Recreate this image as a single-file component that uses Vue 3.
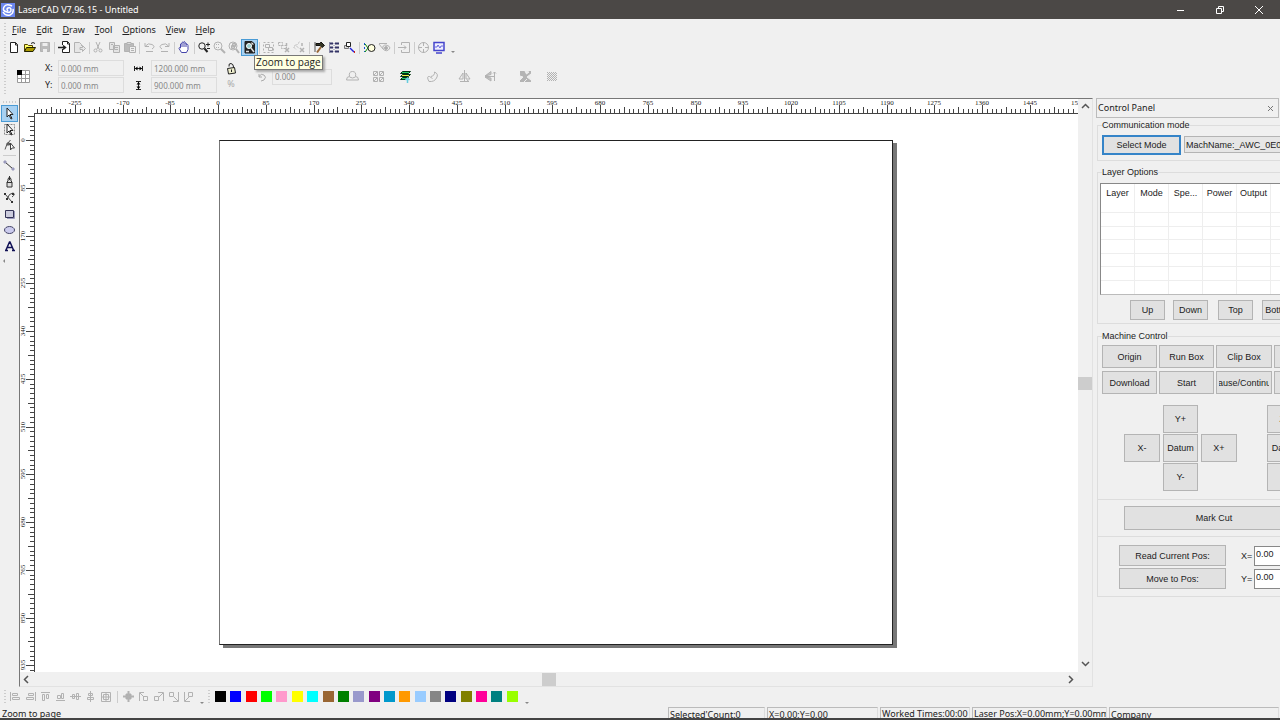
<script setup>
const menus = ['File', 'Edit', 'Draw', 'Tool', 'Options', 'View', 'Help']

const magnifier = '<circle cx="5" cy="6" r="3.200"/><path d="M7.500 8.500L10.500 12" stroke-width="2"/>'
const standard = [
  { name: 'New', svg: '<path d="M3.500 2.500h5l2 2v8h-7zM8.500 2.500v2.500h2" fill="#fff"/>' },
  { name: 'Open', svg: '<path d="M2.500 11.500v-7h3l1 1h4v2" fill="#ff6" stroke="#540"/><path d="M2.500 11.500l2-4h9l-2.500 4z" fill="#a90" stroke="#220"/><path d="M9 3.500q2-2 4 0" stroke="#222"/>' },
  { name: 'Save', off: 1, svg: '<path d="M3.500 2.500h9v9h-9z" fill="#bbb"/><path d="M5.500 3h5v3h-5zM6 9h4v3H6z" fill="#eee" stroke="none"/>' },
  null,
  { name: 'Import', svg: '<path d="M5.500 5V1.500h5l2 2v9h-7V9M10.500 1.500v2.500h2" fill="#fff"/><path d="M1 7.500h7M6 5.500l2.500 2L6 9.500" stroke-width="1.500"/>' },
  { name: 'Export', off: 1, svg: '<path d="M8.500 12.500h-6v-10h5l2 2V6M8 9.500v-2h2.500v-2l3 3-3 3v-2z" fill="#e6e6e6"/>' },
  null,
  { name: 'Cut', off: 1, svg: '<path d="M4 2l3 7M8 2L5 9"/><circle cx="3.500" cy="10.500" r="1.500"/><circle cx="8.500" cy="10.500" r="1.500"/>' },
  { name: 'Copy', off: 1, svg: '<path d="M2.500 2.500h5v7h-5zM6.500 5.500h6v7h-6z" fill="#e4e4e4"/><path d="M8 7.500h3M8 9.500h3M4 4.500h2"/>' },
  { name: 'Paste', off: 1, svg: '<path d="M2.500 3.500h9v8h-9z" fill="#bbb"/><path d="M5 2.500h4v2H5z" fill="#ddd"/><path d="M7.500 6.500h6v6h-6z" fill="#eee"/><path d="M9 8.500h3M9 10.500h3"/>' },
  null,
  { name: 'Undo', off: 1, svg: '<path d="M3 3v3.500h4M3.500 6Q6 2.500 10 4.500T10 9M4 11.500h7"/>' },
  { name: 'Redo', off: 1, svg: '<path d="M12 3v3.500H8M11.500 6Q9 2.500 5 4.500T5 9M4 11.500h7"/>' },
  null,
  { name: 'Pan', svg: '<path d="M4.500 12.500L2 8.500q0-1.500 1.500-.5V4q1-1 1.500 0V2.500q1-1 1.500 0V2q1-1 1.500 0v1.500q1-1 1.500 0v1q1.500-.500 1.500 1v4l-1.500 3z" fill="#fff" stroke="#44a"/><path d="M5 4v3M7 3v4M9 4v3" stroke="#44a"/>' },
  null,
  { name: 'Zoom', svg: magnifier + '<path d="M9 4.500h4M11 2.500v4M10 8.500h3"/>' },
  { name: 'Zoom to selection', off: 1, svg: '<circle cx="6" cy="6" r="4"/><path d="M9 9l4 4" stroke-width="2"/><path d="M4 4.500h4M4 7.500h4" stroke-dasharray="1 1"/>' },
  { name: 'Zoom to all', off: 1, svg: '<circle cx="6" cy="6" r="4"/><path d="M9 9l3 4" stroke-width="2"/><path d="M4.500 5.500h3v3h-3zM5.500 3.500h3v3h-3z" fill="#ccc"/>' },
  { name: 'Zoom to page', on: 1, svg: '<path d="M3 1.500h7l2.500 2.500v9H3z" fill="#222"/><path d="M9.500 2l2.500 2.500H9.500z" fill="#fff" stroke="none"/><circle cx="7" cy="6" r="2.500" fill="#9cc" stroke="#fff"/><path d="M9 8l3 4M4 11.500h3" stroke="#ddd" stroke-width="1.500"/>' },
  null,
  { name: 'Group', off: 1, svg: '<path d="M1.500 2.500h10v10h-10z" stroke-dasharray="2 2"/><path d="M3.500 4.500h4v3h-4zM6.500 7.500h4v3h-4z"/>' },
  { name: 'Ungroup', off: 1, svg: '<path d="M1.500 2.500h4v3h-4zM4.500 5.500h5v3h-5z" stroke-dasharray="2 1"/><path d="M8 8l4 4M12 8l-4 4M9.500 3v3" stroke-width="1.500"/>' },
  { name: 'Ungroup all', off: 1, svg: '<path d="M7.500 2L4 5.500l3 3M3.500 5L1.500 7l2.500 2.500" stroke-dasharray="2 1"/><path d="M8 8l4 4M12 8l-4 4M10 3v3" stroke-width="1.500"/>' },
  null,
  { name: 'Node tool', svg: '<path d="M3 2v10" stroke="#555"/><path d="M4 3.500h4l1-1.500 3.500 3.500-2.500 2-2-2H4z" fill="#332" stroke="#111"/><path d="M9 7l-4 5.500" stroke="#963" stroke-width="2"/>' },
  { name: 'Array', svg: '<path d="M2 3.500h4M2 7.500h4M2 11.500h4M8 3.500h4M8 7.500h4M8 11.500h4" stroke="#336" stroke-width="2"/><path d="M2.500 3v9M7 3v9" stroke="#88a" stroke-dasharray="1 1"/>' },
  { name: 'Path optimise', svg: '<path d="M2.500 5.500h4v3h-4z" fill="#ddd" stroke="#777"/><path d="M4.500 2.500h4v4h-4z" fill="#fff"/><path d="M8 8l4 4" stroke="#22d" stroke-width="1.500"/><path d="M12.500 11v2" stroke="#c22"/>' },
  null,
  { name: 'Simulate', svg: '<path d="M2.500 3v9" stroke="#15c" stroke-dasharray="2 2"/><path d="M3 4l3 4-3 4" stroke="#080"/><circle cx="9.500" cy="8" r="3.500" fill="#ffd"/>' },
  { name: 'Preview', off: 1, svg: '<path d="M2 3.500h8M2 4l4 5q-1-4 3-4 4 1 4 3-3 5-7 1"/><circle cx="9" cy="8" r="1.500" fill="#aaa"/>' },
  null,
  { name: 'Send', off: 1, svg: '<path d="M4.500 5V2.500h8v10h-8V10M1 7.500h8M7 5.500l2 2-2 2"/>' },
  null,
  { name: 'Locate', off: 1, svg: '<circle cx="6.500" cy="7.500" r="5"/><path d="M6.500 2v4M6.500 9v4M1 7.500h4M8 7.500h4"/>' },
  { name: 'Monitor', svg: '<path d="M2 2.500h10v8H2zM4 13h6" fill="#eef" stroke="#44c" stroke-width="1.500"/><path d="M3 7h2l1-2 2 3 1-2h2" stroke="#66d"/>' },
]

const shaping = [
  { name: 'Weld', svg: '<path d="M4.500 7.500q-1-5 3-5t3 5q3 0 3 3.500h-12q0-3.500 3-3.500zM4.500 8q3 2 6 0"/>' },
  { name: 'Tile', svg: '<path d="M2.500 2.500h4v4h-4zM8.500 2.500h4v4h-4zM2.500 8.500h4v4h-4zM8.500 8.500h4v4h-4z"/><path d="M3 6l3-3M9 6l3-3M3 12l3-3M9 12l3-3"/>' },
  { name: 'Layers', color: 1, svg: '<path d="M4.500 2.500h8l-2 2h-8z" fill="#2c6" stroke="#031"/><path d="M4.500 5.500h8l-2 2h-8z" fill="#ee4" stroke="#031"/><path d="M4.500 8.500h6l-2 2h-6z" fill="#2c6" stroke="#031"/><path d="M9.500 14V9M7.500 11l2-2 2 2" stroke="#6cd" stroke-width="1.500"/>' },
  { name: 'Smooth', svg: '<path d="M4 12.500Q1 7 4.500 7.500l3 2M6 7.500q4-1 3.500-4.500 4.500 2 2 6-2 4-7.500 3.500"/>' },
  { name: 'Mirror horizontally', svg: '<path d="M7.500 1v11M6 4v6H2zM9 4v6h4zM3 12.500h9M10 11l2 1.500"/>' },
  { name: 'Mirror vertically', svg: '<path d="M2 7L8 2.500v3zM2 8l6 4v-3z" fill="#c4c4c4"/><path d="M2 7.500h9M11.500 3v9M10 4.500L11.500 3 13 4.500"/>' },
  { name: 'Invert', svg: '<path d="M2 2h11v11H2z" fill="#b4b4b4" stroke="none"/><path d="M7 2l1.500 3L11 3zM2 7l3 1-3 3zM13 5L9 8l4 3zM6 13l3-3" fill="#eee" stroke="#eee"/>' },
  { name: 'Bitmap', svg: '<path d="M3 3.500h10M3 5.500h10M3 7.500h10M3 9.500h10M3 11.500h10" stroke-dasharray="1 1"/><path d="M4 4.500h9M4 6.500h9M4 8.500h9M4 10.500h9" stroke-dasharray="1 1"/>' },
]

const tools = [
  { name: 'Pick', on: 1, svg: '<path d="M5 2v9l2-2 2 4 1-.5-2-4h3z" fill="#fff"/>' },
  { name: 'Marquee', svg: '<path d="M2.500 2.500h10v10h-10z" stroke="#888" stroke-dasharray="2 1"/><path d="M5 2v9l2-2 2 4 1-.5-2-4h3z" fill="#fff"/>' },
  { name: 'Edit node', svg: '<path d="M8.500 2Q4 6 3 11.500" stroke="#555"/><path d="M8.500 5v7l1.500-2h2.500z" fill="#fff" stroke="#444"/><path d="M5 5h2.500v2H5z" fill="#777" stroke="#555"/>' },
  null,
  { name: 'Line', svg: '<path d="M3 4l8 7" stroke="#333"/><path d="M2 3h2v2H2zM10 10h2v2h-2z" fill="#99b" stroke="#99b"/>' },
  { name: 'Pen', svg: '<path d="M7.500 2v4M6 5l1.500-2L9 5v2l1 1v5H5V8l1-1z" fill="#ddd" stroke="#333"/><path d="M5 8.500h5" stroke="#333"/>' },
  { name: 'Bezier', svg: '<path d="M3 4l7 8M5 9q2-6 6-6 3 1-1 4" stroke="#444"/><path d="M2 3h2v2H2zM9 11h2v2H9zM10 3h2v2h-2zM4 8h2v2H4z" fill="#333" stroke="none"/>' },
  { name: 'Rectangle', svg: '<path d="M3.500 4.500h8v7h-8z" fill="#ccd" stroke="#335"/><path d="M12.500 5v7.500H5" stroke="#99b"/>' },
  { name: 'Ellipse', svg: '<ellipse cx="7.500" cy="8" rx="5" ry="3.500" fill="#cce" stroke="#446"/>' },
  { name: 'Text', svg: '<path d="M4 12L7.500 4h.5l3.500 8M5.500 9.500h5M3 12.500h3M10 12.500h3" stroke="#115" stroke-width="1.500"/>' },
]

const align = [
  { name: 'Align left', svg: '<path d="M2.500 3v9M4.500 4.500h5v2h-5zM4.500 8.500h7v2h-7z"/>' },
  { name: 'Align right', svg: '<path d="M12.500 3v9M5.500 4.500h5v2h-5zM3.500 8.500h7v2h-7z"/>' },
  { name: 'Align top', svg: '<path d="M3 3.500h9M4.500 5.500h2v6h-2zM8.500 5.500h2v4h-2z"/>' },
  { name: 'Align bottom', svg: '<path d="M3 11.500h9M4.500 6.500h3v3h-3zM8.500 4.500h2v5h-2z"/>' },
  { name: 'Align middle', svg: '<path d="M2 7.500h11M4.500 5.500h2v4h-2zM8.500 4.500h2v6h-2z"/>' },
  { name: 'Align centre', svg: '<path d="M7.500 2v11M5.500 4.500h4v2h-4zM4.500 8.500h6v2h-6z"/>' },
  { name: 'Centre on page', svg: '<path d="M3.500 3.500h9v9h-9zM5.500 5.500h5v5h-5zM8 3v9M3 8h9"/>' },
  null,
  { name: 'Distribute', svg: '<path d="M5 5h5v5H5z" fill="#aaa"/><path d="M7.500 2v11M2 7.500h11" stroke-width="2"/>' },
  { name: 'To top left', svg: '<path d="M3.500 12V3.500H8M4 4l4 4M7.500 7.500h4v4h-4z"/>' },
  { name: 'To top right', svg: '<path d="M7 3.500h5.500V12M12 4L8 8M3.500 7.500h4v4h-4z"/>' },
  { name: 'To bottom right', svg: '<path d="M3.500 3.500h4v4h-4zM12.500 3v9.500H7M8 8l4 4"/>' },
  { name: 'To bottom left', svg: '<path d="M7.500 3.500h4v4h-4zM3.500 3v9.500H9M8 8l-4 4"/>' },
]

const palette = ['#000', '#00f', '#f00', '#0f0', '#f9c', '#ff0', '#0ff', '#963', '#008000', '#99c', '#800080', '#09c', '#f90', '#9cf', '#868686', '#000080', '#808000', '#f09', '#008080', '#9f0']

const STEP = 47.75
function ticks(origin, start, end, first) {
  const out = []
  for (let i = first * 10; i < 200; i++) {
    const at = Math.round(origin + (i * STEP) / 10)
    if (at < start || at > end) continue
    out.push({ at, len: i % 10 === 0 ? 8 : i % 5 === 0 ? 6 : 4 })
  }
  return out
}
function labels(origin, first, last) {
  const out = []
  for (let i = first; i <= last; i++) out.push({ at: Math.round(origin + i * STEP), text: i * 85 })
  return out
}
const hTicks = ticks(198, 16, 1057, -4)
const hLabels = labels(198, -3, 18)
const vTicks = ticks(26, 2, 558, -1)
const vLabels = labels(26, 0, 11)

const columns = ['Layer', 'Mode', 'Spe...', 'Power', 'Output', '']
</script>

<template>
  <div class="window">
    <header class="titlebar">
      <svg class="logo" width="14" height="14" viewBox="0 0 14 14"><rect width="14" height="14" fill="#6b86ee" /><path d="M11 3Q5 0 3 4t3 5q4 1 4-2T7 5q-2 1 0 3M2 9q2 4 7 3 4-2 3-6" fill="none" stroke="#fff" stroke-width="1.500" /></svg>
      <h1>LaserCAD V7.96.15 - Untitled</h1>
      <button aria-label="Minimize"><svg width="12" height="12"><path d="M2 6.500h7" stroke="#fff" /></svg></button>
      <button aria-label="Restore"><svg width="12" height="12"><path d="M2.500 4.500h5v5h-5zM4.500 4V2.500h5v5H8" fill="none" stroke="#fff" /></svg></button>
      <button aria-label="Close"><svg width="12" height="12"><path d="M2 2l8 8M10 2l-8 8" stroke="#fff" /></svg></button>
    </header>

    <nav class="menubar">
      <i class="grip"></i>
      <button v-for="m in menus" :key="m"><u>{{ m[0] }}</u>{{ m.slice(1) }}</button>
    </nav>

    <div class="toolbar">
      <i class="grip"></i>
      <template v-for="(t, i) in standard" :key="i">
        <button v-if="t" class="tool" :class="{ off: t.off, on: t.on }" :aria-label="t.name">
          <svg width="15" height="15" viewBox="0 0 15 15" v-html="t.svg"></svg>
          <span v-if="t.on" class="tooltip">{{ t.name }}</span>
        </button>
        <i v-else class="sep"></i>
      </template>
      <i class="more"></i>
    </div>

    <div class="props">
      <i class="grip"></i>
      <svg class="anchor" width="13" height="13"><path d="M.5 .5h12v12H.5zM4.500 0v13M8.500 0v13M0 4.500h13M0 8.500h13" fill="#fff" stroke="#999" /><path d="M0 0h5v5H0z" /></svg>
      <div class="fields pos">
        <label for="px">X:</label><input id="px" value="0.000 mm" disabled />
        <label for="py">Y:</label><input id="py" value="0.000 mm" disabled />
      </div>
      <div class="fields size">
        <label for="sw" aria-label="Width"><svg width="9" height="9"><path d="M.5 2v5M8.500 2v5M1 4.500h7" stroke="#222" /><path d="M1 4.500l2.500-2v4zM8 4.500l-2.500-2v4z" /></svg></label><input id="sw" value="1200.000 mm" disabled />
        <label for="sh" aria-label="Height"><svg width="9" height="9"><path d="M2 .5h5M2 8.500h5M4.500 1v7" stroke="#222" /><path d="M4.500 1l-2 2.500h4zM4.500 8l-2-2.500h4z" /></svg></label><input id="sh" value="900.000 mm" disabled />
      </div>
      <div class="ratio">
        <svg width="11" height="13"><path d="M3 4.500Q2.500 1 5 1.500T7.500 5v1" fill="none" stroke="#222" /><path d="M1.500 6.500l7-1 1 5.500-7 1z" fill="#eec" stroke="#222" /><path d="M5.500 7.500v2.500" stroke="#222" /></svg>
        <span>%</span>
      </div>
      <div class="angle">
        <label for="rot" aria-label="Rotation"><svg width="10" height="10"><path d="M2 2v3h3M2 4.500Q4 1 7 3t0 5l-3 1" fill="none" stroke="#aaa" /></svg></label>
        <input id="rot" value="0.000" disabled />
      </div>
      <div class="shaping">
        <button v-for="s in shaping" :key="s.name" class="tool" :class="{ off: !s.color }" :aria-label="s.name"><svg width="15" height="15" viewBox="0 0 15 15" v-html="s.svg"></svg></button>
      </div>
    </div>

    <main class="body">
      <aside class="toolbox">
        <i class="hgrip"></i>
        <template v-for="(t, i) in tools" :key="i">
          <button v-if="t" class="tool" :class="{ on: t.on }" :aria-label="t.name"><svg width="15" height="15" viewBox="0 0 15 15" v-html="t.svg"></svg></button>
          <i v-else class="hsep"></i>
        </template>
        <i class="collapse"></i>
      </aside>

      <section class="workspace">
        <svg class="hruler">
          <path d="M14 14.500H1058" stroke="#333" />
          <path v-for="t in hTicks" :key="t.at" :d="`M${t.at}.5 ${14 - t.len}V14`" />
          <text v-for="l in hLabels" :key="l.text" :x="l.at" y="6">{{ l.text }}</text>
        </svg>
        <svg class="vruler">
          <path d="M14.500 0V558" stroke="#333" />
          <path v-for="t in vTicks" :key="t.at" :d="`M${14 - t.len} ${t.at}.5H14`" />
          <text v-for="l in vLabels" :key="l.text" :transform="`translate(5 ${l.at}) rotate(-90)`">{{ l.text }}</text>
        </svg>
        <div class="canvas"><div class="page"></div></div>
        <div class="vscroll">
          <svg width="9" height="6"><path d="M1 5l3.500-3.500L8 5" /></svg>
          <i class="thumb"></i>
          <svg width="9" height="6"><path d="M1 1l3.500 3.500L8 1" /></svg>
        </div>
        <div class="hscroll">
          <svg width="6" height="9"><path d="M5 1L1.500 4.500 5 8" /></svg>
          <i class="thumb"></i>
          <svg width="6" height="9"><path d="M1 1l3.500 3.500L1 8" /></svg>
        </div>
      </section>

      <aside class="panel">
        <div class="panel-title"><h2>Control Panel</h2><button aria-label="Close panel"><svg width="7" height="7"><path d="M1 1l5 5M6 1L1 6" stroke="#777" /></svg></button></div>
        <fieldset class="comm">
          <legend>Communication mode</legend>
          <div class="row"><button class="btn focus">Select Mode</button><button class="btn mach">MachName:_AWC_0E0</button></div>
        </fieldset>
        <fieldset class="layers">
          <legend>Layer Options</legend>
          <table>
            <thead><tr><th v-for="c in columns" :key="c">{{ c }}</th></tr></thead>
            <tbody><tr v-for="r in 6" :key="r"><td v-for="c in columns" :key="c"></td></tr></tbody>
          </table>
          <div class="order">
            <button class="btn">Up</button><button class="btn">Down</button><button class="btn">Top</button><button class="btn">Bottom</button>
          </div>
        </fieldset>
        <fieldset class="machine">
          <legend>Machine Control</legend>
          <div class="actions">
            <button class="btn">Origin</button><button class="btn">Run Box</button><button class="btn">Clip Box</button><button class="btn"></button>
            <button class="btn">Download</button><button class="btn">Start</button><button class="btn"><span class="clip">Pause/Continue</span></button><button class="btn"></button>
          </div>
          <div class="jog">
            <i></i><button class="btn">Y+</button><i></i><i></i><button class="btn">Z+</button>
            <button class="btn">X-</button><button class="btn">Datum</button><button class="btn">X+</button><i></i><button class="btn">Datum</button>
            <i></i><button class="btn">Y-</button><i></i><i></i><button class="btn">Z-</button>
          </div>
        </fieldset>
        <div class="mark"><button class="btn">Mark Cut</button></div>
        <div class="goto">
          <button class="btn">Read Current Pos:</button><label for="gx">X=</label><input id="gx" value="0.00" />
          <button class="btn">Move to Pos:</button><label for="gy">Y=</label><input id="gy" value="0.00" />
        </div>
      </aside>
    </main>

    <div class="bottombar">
      <i class="grip"></i>
      <template v-for="(t, i) in align" :key="i">
        <button v-if="t" class="tool off" :aria-label="t.name"><svg width="15" height="15" viewBox="0 0 15 15" v-html="t.svg"></svg></button>
        <i v-else class="sep"></i>
      </template>
      <i class="more"></i>
      <i class="grip second"></i>
      <div class="palette"><button v-for="c in palette" :key="c" :style="{ background: c }" :aria-label="'Colour ' + c"></button></div>
      <i class="more"></i>
    </div>

    <footer class="status">
      <span class="hint">Zoom to page</span>
      <span class="cell low">Selected'Count:0</span>
      <span class="cell low">X=0.00;Y=0.00</span>
      <span class="cell">Worked Times:00:00</span>
      <span class="cell">Laser Pos:X=0.00mm;Y=0.00mm</span>
      <span class="cell low">Company</span>
    </footer>
  </div>
</template>

<style>
body { background: #f0f0f0; }
</style>

<style scoped>
* { box-sizing: border-box; }
.window { height: 100vh; display: flex; flex-direction: column; overflow: hidden; background: #f0f0f0; color: #222; font: 9px/14px "Noto Sans", "Open Sans", sans-serif; }
button, input { font: inherit; color: inherit; padding: 0; margin: 0; border: 0; background: none; min-width: 0; }
svg { display: block; flex: none; }
h1, h2 { margin: 0; font: inherit; }

.titlebar { flex: none; height: 19px; display: flex; align-items: center; background: #4b4846; color: #fff; padding: 0 2px 0 1px; }
.titlebar h1 { flex: 1; margin-left: 3px; }
.titlebar button { width: 39px; height: 18px; display: grid; place-items: center; }

.menubar { flex: none; height: 21px; display: flex; align-items: center; gap: 10px; padding-left: 4px; }
.menubar .grip { margin-right: -4px; }
.grip { flex: none; width: 2px; height: 13px; margin-right: 1px; background: repeating-linear-gradient(#ccc 0 1px, transparent 1px 3px); }

.toolbar { flex: none; height: 15px; display: flex; align-items: center; padding-left: 4px; }
.tool { flex: none; width: 15px; height: 15px; position: relative; }
.tool :deep(svg) { fill: none; stroke: #222; }
.tool.off :deep(svg) { stroke: #b2b2b2; }
.tool.on { background: #a8d1f2; outline: 1px solid #4a9bd5; }
.sep { flex: none; width: 1px; height: 12px; margin: 0 2px; background: #ccc; }
.more { flex: none; border: 2px solid transparent; border-top-color: #888; align-self: flex-end; margin-left: 4px; }
.tooltip { position: absolute; left: 12px; top: 15px; z-index: 5; padding: 0 1px; background: #ffffe1; border: 1px solid #777; box-shadow: 2px 2px 2px #aaa; font: 10px/13px "Open Sans", "Noto Sans", sans-serif; white-space: nowrap; }

.props { flex: none; height: 43px; display: flex; align-items: center; padding-left: 4px; color: #888; }
.props .grip { height: 34px; margin: 0; }
.anchor { margin-left: 11px; }
.fields { display: grid; grid-template-columns: 15px 66px; row-gap: 1px; align-items: center; }
.fields.pos { margin-left: 13px; }
.fields.size { margin-left: 10px; grid-template-columns: 17px 66px; }
.fields label { color: #222; padding-left: 2px; }
.fields.size label { padding-left: 0; }
.fields input, .angle input { height: 16px; padding: 0 2px; border: 1px solid #ddd; font-size: 8px; }
.ratio { width: 12px; margin-left: 8px; display: grid; gap: 2px; justify-items: center; color: #aaa; }
.angle { display: flex; align-items: center; gap: 5px; margin-left: 20px; }
.angle input { width: 60px; }
.shaping { display: flex; margin-left: 13px; gap: 11px; }
.shaping .tool:nth-child(3) { margin: 0 1px; }
.shaping .tool:nth-child(4) { margin-right: 6px; }
.shaping .tool:nth-child(6) { margin-right: 9px; }

.body { flex: 1; min-height: 0; display: grid; grid-template-columns: 19px minmax(0, 1fr) 184px; }
.toolbox { display: flex; flex-direction: column; align-items: center; gap: 1px; padding-top: 3px; }
.hgrip { width: 13px; height: 2px; margin-bottom: 2px; background: repeating-linear-gradient(90deg, #ccc 0 1px, transparent 1px 3px); }
.hsep { width: 13px; height: 1px; margin: 1px 0; background: #ccc; }
.collapse { border: 2px solid transparent; border-right-color: #888; align-self: flex-start; margin: 5px 0 0 1px; }

.workspace { margin-right: 3px; border-left: 1px solid #777; border-top: 1px solid #777; border-right: 1px solid #e2e2e2; border-bottom: 1px solid #e2e2e2; background: #fff; display: grid; grid-template-columns: 15px minmax(0, 1fr) 14px; grid-template-rows: 15px minmax(0, 1fr) 14px; }
.hruler { grid-area: 1 / 1 / 2 / 3; width: 100%; height: 15px; overflow: hidden; }
.vruler { grid-area: 2 / 1; width: 15px; height: 100%; overflow: hidden; }
.hruler path, .vruler path { stroke: #444; }
.hruler text, .vruler text { font: 7px "Liberation Serif", serif; text-anchor: middle; fill: #222; }
.canvas { grid-area: 2 / 2; position: relative; overflow: hidden; }
.page { position: absolute; left: 17.600%; right: 17.700%; top: 26px; bottom: 27px; background: #fff; border: 1px solid #222; border-left-color: #777; box-shadow: 4px 3px 0 #777; }
.vscroll { grid-area: 1 / 3 / 3 / 4; display: flex; flex-direction: column; align-items: center; justify-content: space-between; background: #f0f0f0; padding: 4px 0 5px; }
.hscroll { grid-area: 3 / 1 / 4 / 4; display: flex; align-items: center; justify-content: space-between; background: #f0f0f0; padding: 0 18px 0 3px; }
.vscroll path, .hscroll path { fill: none; stroke: #555; stroke-width: 1.500; }
.thumb { width: 14px; height: 13px; background: #cdcdcd; }
.vscroll .thumb { margin-bottom: 3px; }

.panel { overflow: hidden; font: 9px/12px "Liberation Sans", Arial, sans-serif; }
.panel-title { height: 20px; border: 1px solid #bbb; display: flex; align-items: center; justify-content: space-between; padding: 0 4px 0 1px; margin-right: 1px; }
.panel-title h2 { font: 9px/14px "Noto Sans", "Open Sans", sans-serif; }
fieldset { margin: 0 0 0 1px; padding: 0; border: 1px solid #ddd; border-right: 0; min-width: 0; }
legend { padding: 0; }
.btn { height: 20px; display: flex; align-items: center; justify-content: center; overflow: hidden; white-space: nowrap; background: #e1e1e1; border: 1px solid #b4b4b4; }
.comm { height: 42px; margin-top: 1px; padding: 4px 0 0 4px; }
.row { display: flex; gap: 3px; }
.row .focus { flex: none; width: 79px; border: 2px solid #3584c8; }
.row .mach { flex: none; height: 17px; margin-top: 1px; padding: 0 4px 0 1px; background: #e6e6e6; }
.layers { height: 158px; margin-top: 5px; padding: 5px 0 0 2px; }
.layers legend { margin-left: 2px; }
table { width: 206px; table-layout: fixed; border-collapse: separate; border-spacing: 0; background: #fff; border: 1px solid #888; border-bottom-color: #bbb; }
th, td { padding: 0; border-right: 1px solid #eee; border-bottom: 1px solid #eee; }
th { height: 29px; padding-top: 3px; vertical-align: top; font-weight: normal; }
td { height: 13px; }
tr:nth-child(2n+1) td { height: 14px; }
tr:last-child td { border-bottom: 0; }
.order { display: grid; grid-template-columns: repeat(4, 35px); column-gap: 9px; margin: 5px 0 0 30px; }
.order .btn:nth-child(2) { margin-left: -1px; margin-right: 1px; }
.machine { height: 170px; margin-top: 6px; padding: 3px 0 0 4px; }
.actions { display: grid; grid-template-columns: 55px 55px 56px 55px; gap: 3px 2px; }
.actions .btn { height: 23px; }
.clip { display: flex; justify-content: center; width: 50px; overflow: hidden; }
.jog { display: grid; grid-template-columns: 36px 35px 36px 24px 36px; gap: 1px 3px; margin: 11px 0 0 22px; }
.jog .btn { height: 28px; }
.mark { margin-left: 1px; border-left: 1px solid #ddd; border-bottom: 1px solid #ddd; padding: 6px 0 6px 26px; }
.mark .btn { width: 180px; height: 24px; }
.goto { margin-left: 1px; border-left: 1px solid #ddd; border-bottom: 1px solid #ddd; padding: 8px 0 7px 21px; display: grid; grid-template-columns: 107px 12px 50px; column-gap: 15px; row-gap: 2px; align-items: center; }
.goto .btn { height: 21px; }
.goto input { width: 50px; height: 20px; margin-left: -14px; padding: 0 1px 3px; background: #fff; border: 1px solid #888; }

.bottombar { flex: none; height: 19px; display: flex; align-items: center; padding-left: 4px; }
.bottombar .grip { margin-right: 2px; }
.bottombar .sep { margin: 0 3px 0 4px; }
.bottombar .second { margin: 0 5px 0 4px; }
.palette { width: 303px; display: flex; justify-content: space-between; margin-right: 3px; }
.palette button { width: 11px; height: 11px; }
.status { flex: none; height: 14px; display: grid; grid-template-columns: minmax(0, 1fr) 97px 111px 90px 135px 170px; column-gap: 2px; padding: 1px 1px 0 0; border-bottom: 2px solid #444; overflow: hidden; line-height: 13px; white-space: nowrap; }
.hint { padding-left: 2px; }
.cell { border: 1px solid #bbb; border-right-color: #ddd; border-bottom: 0; padding-left: 1px; line-height: 11px; overflow: hidden; }
.cell.low { line-height: 14px; }
</style>
